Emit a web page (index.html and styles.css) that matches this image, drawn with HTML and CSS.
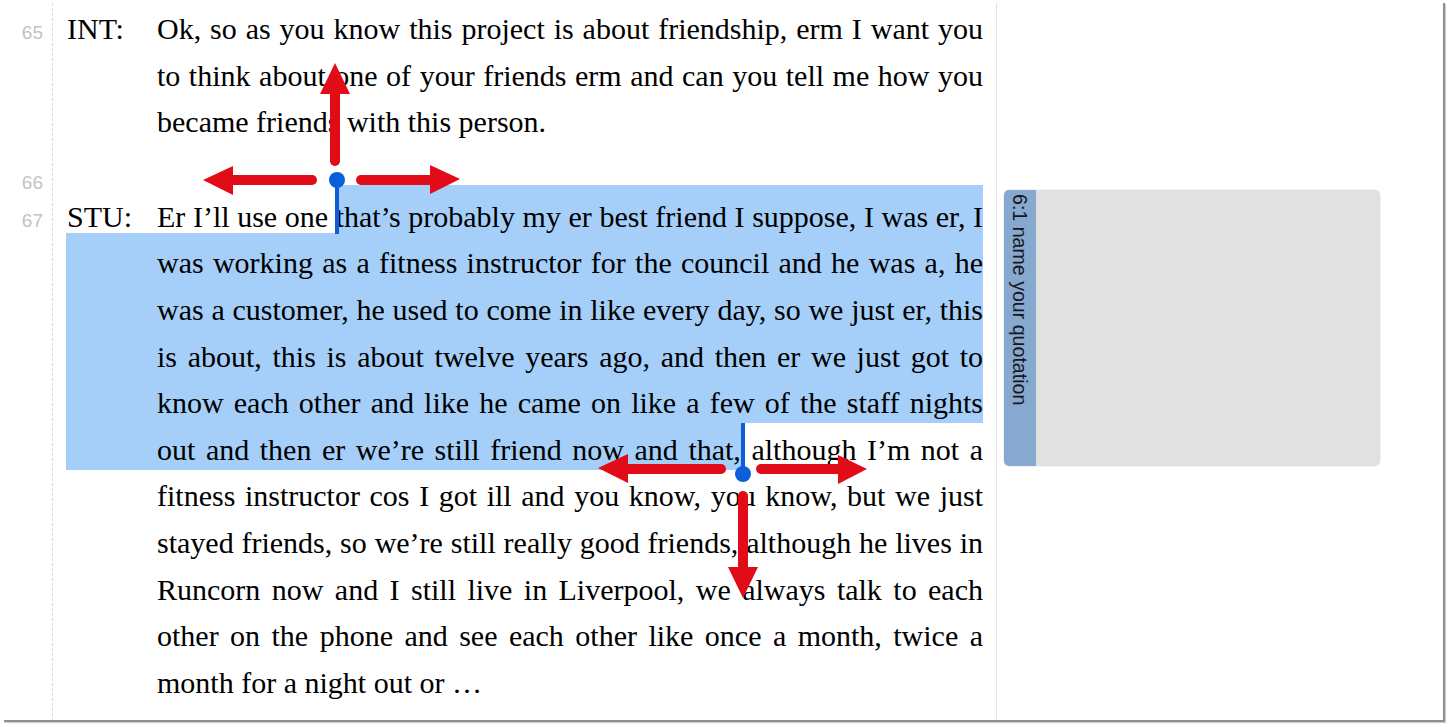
FILE: index.html
```html
<!DOCTYPE html>
<html lang="en">
<head>
<meta charset="utf-8">
<title>Transcript</title>
<link rel="stylesheet" href="styles.css">
</head>
<body>
<div class="window">
  <div class="selection">
    <div class="sel sel-first"></div>
    <div class="sel sel-mid"></div>
    <div class="sel sel-last"></div>
  </div>
  <div class="doc">
    <div class="para">
      <div class="num">65</div>
      <div class="spk">INT:</div>
      <div class="txt">
        <span class="ln">Ok, so as you know this project is about friendship, erm I want you</span>
        <span class="ln">to think about one of your friends erm and can you tell me how you</span>
        <span class="ln end">became friends with this person.</span>
      </div>
    </div>
    <div class="para empty">
      <div class="num">66</div>
    </div>
    <div class="para">
      <div class="num">67</div>
      <div class="spk">STU:</div>
      <div class="txt">
        <span class="ln">Er I’ll use one that’s probably my er best friend I suppose, I was er, I</span>
        <span class="ln">was working as a fitness instructor for the council and he was a, he</span>
        <span class="ln">was a customer, he used to come in like every day, so we just er, this</span>
        <span class="ln">is about, this is about twelve years ago, and then er we just got to</span>
        <span class="ln">know each other and like he came on like a few of the staff nights</span>
        <span class="ln">out and then er we’re still friend now and that, although I’m not a</span>
        <span class="ln">fitness instructor cos I got ill and you know, you know, but we just</span>
        <span class="ln">stayed friends, so we’re still really good friends, although he lives in</span>
        <span class="ln">Runcorn now and I still live in Liverpool, we always talk to each</span>
        <span class="ln">other on the phone and see each other like once a month, twice a</span>
        <span class="ln end">month for a night out or …</span>
      </div>
    </div>
  </div>
  <div class="side">
    <div class="quote">
      <div class="tab"><span class="tab-label">6:1 name your quotation</span></div>
      <div class="quote-body"></div>
    </div>
  </div>
</div>
<svg class="marks" width="1450" height="727" viewBox="0 0 1450 727" xmlns="http://www.w3.org/2000/svg">
  <g class="red">
    <line x1="335" y1="161" x2="335" y2="92"/>
    <polygon points="335,63 320,94 350,94"/>
    <line x1="312" y1="180" x2="232" y2="180"/>
    <polygon points="203,180 233,166 233,195"/>
    <line x1="361" y1="180" x2="431" y2="180"/>
    <polygon points="460,179 430,165 430,194"/>

    <line x1="721" y1="469" x2="626" y2="469"/>
    <polygon points="598,468 628,454 628,483"/>
    <line x1="761" y1="469" x2="839" y2="469"/>
    <polygon points="867,469 838,455 838,484"/>
    <line x1="743" y1="496" x2="743" y2="568"/>
    <polygon points="743,598 728,567 758,567"/>
  </g>
  <g class="blue">
    <rect x="335" y="180" width="4" height="54"/>
    <circle cx="337" cy="180" r="8"/>
    <rect x="741" y="423" width="4" height="51"/>
    <circle cx="743" cy="474" r="8"/>
  </g>
</svg>
</body>
</html>
```
FILE: styles.css
```css
* { box-sizing: border-box; }

html, body {
  margin: 0;
  padding: 0;
  background: #ffffff;
}

body {
  position: relative;
  width: 1450px;
  height: 727px;
  overflow: hidden;
}

.window {
  position: relative;
  margin: 3px 0 0 4px;
  width: 1441px;
  height: 719px;
  display: flex;
  background: #ffffff;
  border-right: 2px solid #8f8f8f;
  border-bottom: 2px solid #8f8f8f;
  box-shadow: 1px 1px 1px rgba(0, 0, 0, 0.18);
}

/* selection highlight layer (under the text) */
.selection {
  position: absolute;
  inset: 0;
  pointer-events: none;
}
.sel {
  position: absolute;
  background: #a5cff9;
}
.sel-first { left: 334px; top: 182px; width: 645px; height: 48px; }
.sel-mid   { left: 62px;  top: 230px; width: 917px; height: 190px; }
.sel-last  { left: 62px;  top: 420px; width: 677px; height: 47px; }

.doc {
  position: relative;
  width: 993px;
  height: 100%;
  padding-top: 3px;
  border-right: 1px dotted #c9c9c9;
  background-image: repeating-linear-gradient(to bottom, #d9d9d9 0 3px, transparent 3px 5px);
  background-size: 1px 100%;
  background-position: 48px 0;
  background-repeat: no-repeat;
  font-family: "Liberation Serif", "Times New Roman", serif;
  font-size: 30px;
  line-height: 46.6px;
  color: #000000;
}

.para {
  display: grid;
  grid-template-columns: 39px 114px 826px;
  align-items: baseline;
}

.num {
  font-family: "Liberation Sans", Arial, sans-serif;
  font-size: 19px;
  color: #c3c3c3;
  text-align: right;
}

.spk {
  padding-left: 24px;
}

.txt {
  display: flex;
  flex-direction: column;
}

.ln {
  display: block;
  white-space: nowrap;
  text-align: justify;
  text-align-last: justify;
  width: 826px;
}
.ln.end {
  text-align-last: left;
}

.para.empty {
  height: 48px;
  align-items: start;
}
.para.empty .num {
  padding-top: 27px;
  line-height: 20px;
}

.side {
  flex: 1;
  padding: 187px 0 0 7px;
}

.quote {
  display: flex;
  width: 376px;
  height: 276px;
  border-radius: 5px;
  box-shadow: 0 0 0 1px #f3f3f3;
}

.tab {
  width: 32px;
  background: #87a8cf;
  border-radius: 5px 0 0 5px;
  display: flex;
  justify-content: center;
  padding-top: 4px;
}

.tab-label {
  writing-mode: vertical-rl;
  font-family: "Liberation Sans", Arial, sans-serif;
  font-size: 19.6px;
  line-height: 22px;
  color: #15181d;
  white-space: nowrap;
}

.quote-body {
  flex: 1;
  background: #e1e1e1;
  border-radius: 0 5px 5px 0;
}

.marks {
  position: absolute;
  left: 0;
  top: 0;
  pointer-events: none;
}
.marks .red line {
  stroke: #e20b18;
  stroke-width: 10;
  stroke-linecap: round;
}
.marks .red polygon {
  fill: #e20b18;
}
.marks .blue rect,
.marks .blue circle {
  fill: #0b5fd8;
}
```
